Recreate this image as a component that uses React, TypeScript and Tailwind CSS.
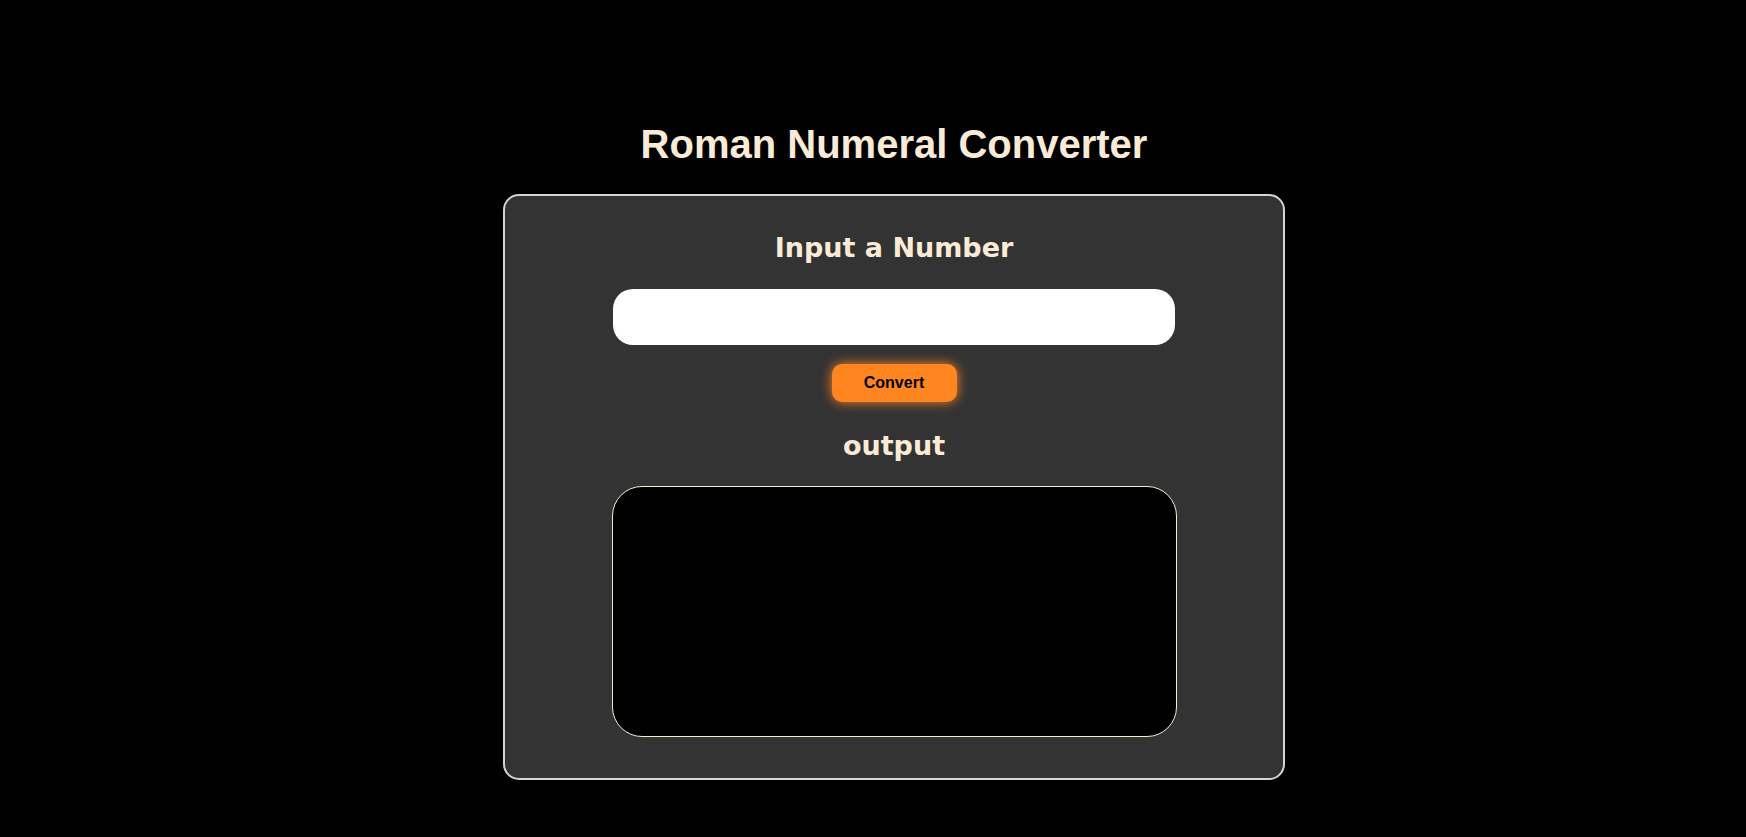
import React from "react";

export default function App() {
  return (
    <div className="min-h-screen w-full bg-black">
      <div className="flex flex-col items-center pl-[42px] pt-[121px]">
        <h1 className="font-['Liberation_Sans',Arial,sans-serif] text-[40px] font-bold leading-[46px] text-[#faebd7]">
          Roman Numeral Converter
        </h1>
        <div className="mt-[27px] flex h-[586px] w-[782px] flex-col items-center rounded-[16px] border-2 border-[#d4d4d4] bg-[#333333]">
          <h2 className="mt-[36px] font-['DejaVu_Sans',Verdana,sans-serif] text-[27px] font-bold leading-[32px] text-[#faebd7]">
            Input a Number
          </h2>
          <input
            type="text"
            className="mt-[25px] h-[56px] w-[562px] rounded-[20px] border-0 bg-white px-4 text-black outline-none"
          />
          <button className="mt-[19px] h-[38px] w-[125px] rounded-[10px] bg-[#ff8521] font-['Liberation_Sans',Arial,sans-serif] text-[16px] font-bold text-black shadow-[0_0_12px_#ff8521]">
            Convert
          </button>
          <h2 className="mt-[28px] font-['DejaVu_Sans',Verdana,sans-serif] text-[27px] font-bold leading-[32px] text-[#faebd7]">
            output
          </h2>
          <div className="mt-[24px] h-[251px] w-[565px] rounded-[30px] border border-[#faebd7] bg-black" />
        </div>
      </div>
    </div>
  );
}
